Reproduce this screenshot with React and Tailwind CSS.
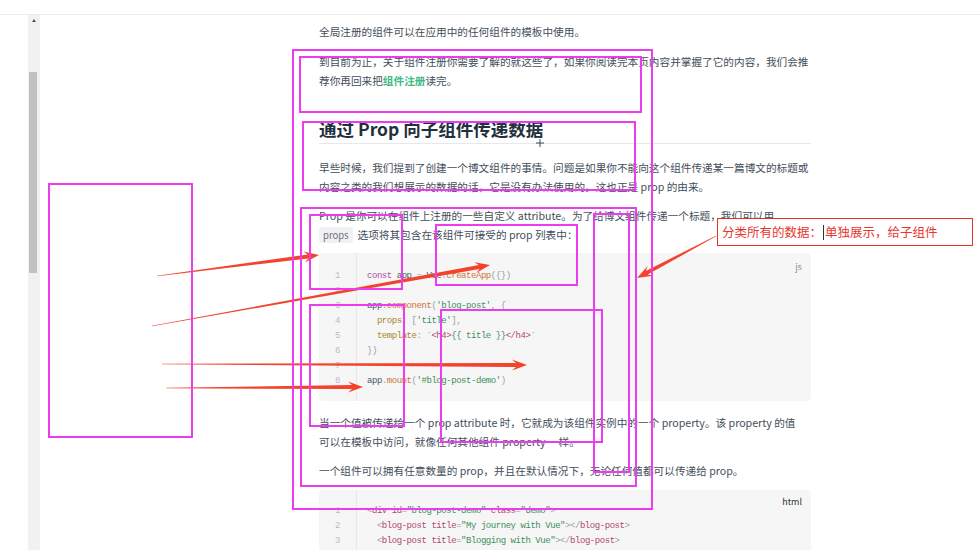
import React from 'react';

const sans = "font-['Noto_Sans_CJK_SC','Noto_Sans',sans-serif]";
const mono = "font-['Liberation_Mono',monospace] text-[9px] tracking-[-0.45px]";

// annotation boxes: x1, y1, x2, y2
const boxes = [
  [292, 49, 653, 510],
  [299, 56, 642, 113],
  [302, 121, 636, 191],
  [300, 207, 637, 487],
  [309, 214, 403, 290],
  [435, 224, 578, 286],
  [309, 304, 405, 427],
  [440, 309, 603, 443],
  [593, 213, 630, 473],
  [48, 183, 193, 438],
];

const arrows = [
  [157, 276, 319, 255],
  [152, 326, 490, 265],
  [162, 364, 527, 365],
  [166, 388, 363, 387],
  [716, 236, 637, 278],
];

function arrowPoints([x1, y1, x2, y2]) {
  const dx = x2 - x1, dy = y2 - y1;
  const len = Math.hypot(dx, dy);
  const ux = dx / len, uy = dy / len;
  const nx = -uy, ny = ux;
  const h = 15, hw = 5.5;
  const bx = x2 - ux * (h - 4), by = y2 - uy * (h - 4);
  const hx = x2 - ux * h, hy = y2 - uy * h;
  const p = [
    [x1 + nx * 0.3, y1 + ny * 0.3],
    [bx + nx * 2, by + ny * 2],
    [hx + nx * hw, hy + ny * hw],
    [x2, y2],
    [hx - nx * hw, hy - ny * hw],
    [bx - nx * 2, by - ny * 2],
    [x1 - nx * 0.3, y1 - ny * 0.3],
  ];
  return p.map(q => q.join(',')).join(' ');
}

const K = ({ c, children }) => <span style={{ color: c }}>{children}</span>;

const kw = '#a9509a', fn = '#cf7438', st = '#3d8f5c', pr = '#a38a2a', pu = '#9aa0a6', tx = '#4f5b66', tg = '#b4476d';

const jsLines = [
  <><K c={kw}>const</K> <K c={tx}>app</K> <K c={pu}>=</K> <K c={tx}>Vue</K><K c={pu}>.</K><K c={fn}>createApp</K><K c={pu}>{'({})'}</K></>,
  null,
  <><K c={tx}>app</K><K c={pu}>.</K><K c={fn}>component</K><K c={pu}>(</K><K c={st}>'blog-post'</K><K c={pu}>, {'{'}</K></>,
  <>  <K c={pr}>props</K><K c={pu}>:</K> <K c={pu}>[</K><K c={st}>'title'</K><K c={pu}>],</K></>,
  <>  <K c={pr}>template</K><K c={pu}>:</K> <K c={st}>`</K><K c={tg}>&lt;h4&gt;</K><K c={st}>{'{{ title }}'}</K><K c={tg}>&lt;/h4&gt;</K><K c={st}>`</K></>,
  <K c={pu}>{'})'}</K>,
  null,
  <><K c={tx}>app</K><K c={pu}>.</K><K c={fn}>mount</K><K c={pu}>(</K><K c={st}>'#blog-post-demo'</K><K c={pu}>)</K></>,
];

const htmlLines = [
  <><K c={pu}>&lt;</K><K c={tg}>div</K> <K c={tg}>id</K><K c={pu}>=</K><K c={st}>"blog-post-demo"</K> <K c={tg}>class</K><K c={pu}>=</K><K c={st}>"demo"</K><K c={pu}>&gt;</K></>,
  <>  <K c={pu}>&lt;</K><K c={tg}>blog-post</K> <K c={tg}>title</K><K c={pu}>=</K><K c={st}>"My journey with Vue"</K><K c={pu}>&gt;&lt;/</K><K c={tg}>blog-post</K><K c={pu}>&gt;</K></>,
  <>  <K c={pu}>&lt;</K><K c={tg}>blog-post</K> <K c={tg}>title</K><K c={pu}>=</K><K c={st}>"Blogging with Vue"</K><K c={pu}>&gt;&lt;/</K><K c={tg}>blog-post</K><K c={pu}>&gt;</K></>,
];

function CodeBlock({ lines, lang, className, pt, langCls }) {
  return (
    <div className={`relative flex rounded-[4px] bg-[#f6f6f7] ${className}`}>
      <span className={`absolute right-[9px] text-[9px] leading-none ${sans} ${langCls}`}>{lang}</span>
      <div className={`w-[38px] border-r border-[#e8e8ea] text-center text-[#b8bcc0] ${mono} ${pt}`}>
        {lines.map((_, i) => (
          <div key={i} className="h-[15px] leading-[15px]">{i + 1}</div>
        ))}
      </div>
      <div className={`pl-[10px] ${mono} ${pt}`}>
        {lines.map((l, i) => (
          <div key={i} className="h-[15px] leading-[15px] whitespace-pre">{l}</div>
        ))}
      </div>
    </div>
  );
}

export default function App() {
  return (
    <div className={`relative w-[980px] h-[550px] overflow-hidden bg-white ${sans}`}>
      <div className="h-[15px] border-b border-[#ececf0]" />
      <div className="flex h-[535px]">
        <div className="w-[28px]" />
        <div className="relative w-[12px] bg-[#f1f1f1]">
          <div className="mx-auto mt-[4px] h-0 w-0 border-x-[2.5px] border-b-[3px] border-x-transparent border-b-[#505050]" />
          <div className="ml-[1px] mt-[50px] h-[201px] w-[8px] bg-[#c1c1c1]" />
        </div>
        <div className="pl-[279px] pt-[7px] text-[10.65px] leading-[19px] text-[#434e5a]">
          <div className="w-[492px]">
            <p className="whitespace-nowrap">全局注册的组件可以在应用中的任何组件的模板中使用。</p>
            <p className="mt-[11px] whitespace-nowrap">
              到目前为止，关于组件注册你需要了解的就这些了，如果你阅读完本页内容并掌握了它的内容，我们会推<br />
              荐你再回来把<span className="font-semibold text-[#42b983]">组件注册</span>读完。
            </p>
            <h2 className="mt-[27px] border-b border-[#e6e8ec] pb-[2px] text-[17.5px] font-bold leading-[24px] text-[#22303e] whitespace-nowrap">
              通过 Prop 向子组件传递数据
            </h2>
            <p className="mt-[14px] whitespace-nowrap">
              早些时候，我们提到了创建一个博文组件的事情。问题是如果你不能向这个组件传递某一篇博文的标题或<br />
              内容之类的我们想展示的数据的话，它是没有办法使用的。这也正是 prop 的由来。
            </p>
            <p className="mt-[10px] whitespace-nowrap">
              Prop 是你可以在组件上注册的一些自定义 attribute。为了给博文组件传递一个标题，我们可以用<br />
              <span className="mr-[5px] rounded-[3px] bg-[#f1f1f3] px-[4px] py-[1px] text-[9.5px] text-[#6a737d]">props</span>
              选项将其包含在该组件可接受的 prop 列表中：
            </p>
            <CodeBlock lines={jsLines} lang="js" className="mt-[8px] h-[148px] [&>span]:top-[8.5px]" pt="pt-[16px]" langCls="text-[#8a8f95]" />
            <p className="mt-[12px] whitespace-nowrap">
              当一个值被传递给一个 prop attribute 时，它就成为该组件实例中的一个 property。该 property 的值<br />
              可以在模板中访问，就像任何其他组件 property 一样。
            </p>
            <p className="mt-[10px] whitespace-nowrap">一个组件可以拥有任意数量的 prop，并且在默认情况下，无论任何值都可以传递给 prop。</p>
            <CodeBlock lines={htmlLines} lang="html" className="mt-[10px] h-[80px] [&>span]:top-[6.5px]" pt="pt-[13.5px]" langCls="text-[#333]" />
          </div>
        </div>
      </div>

      {/* annotations */}
      <svg className="absolute left-0 top-0" width="980" height="550">
        {arrows.map((a, i) => (
          <polygon key={i} points={arrowPoints(a)} fill="#f3432c" />
        ))}
        <g stroke="#3b4a5a" strokeWidth="1">
          <line x1="540" y1="139" x2="540" y2="147" />
          <line x1="536" y1="143" x2="544" y2="143" />
        </g>
      </svg>
      {boxes.map(([x1, y1, x2, y2], i) => (
        <div
          key={i}
          className="absolute border-2 border-[#ec3cf0]"
          style={{ left: x1, top: y1, width: x2 - x1, height: y2 - y1 }}
        />
      ))}
      <div className="absolute left-[717px] top-[218px] flex h-[28px] w-[256px] items-center border border-[#e0332c] bg-white pl-[4px] text-[12.5px] text-[#e8362e] whitespace-nowrap">
        分类所有的数据：<span className="mx-[1px] inline-block h-[15px] w-px bg-[#333]" />单独展示，给子组件
      </div>
    </div>
  );
}
